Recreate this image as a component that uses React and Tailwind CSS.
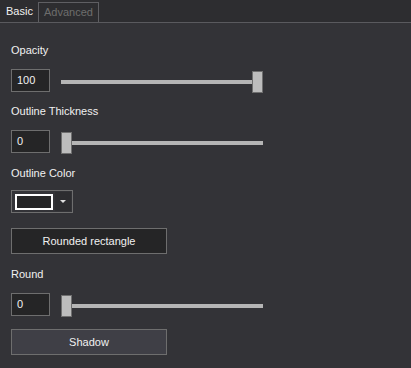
import { useState } from 'react';

function Slider({ value }) {
  const atEnd = value > 0;
  return (
    <div className="relative w-[202px] h-[22px] mt-[2px]">
      <div className={`absolute top-[9px] left-0 h-[4px] bg-[#b5b5b5] ${atEnd ? 'w-[191px]' : 'w-[202px]'}`} />
      <div
        className={`absolute top-0 w-[11px] h-[22px] bg-[#bdbdbd] border border-[#6f6f6f] ${atEnd ? 'right-0' : 'left-0'}`}
      />
    </div>
  );
}

function NumberRow({ value, slider }) {
  return (
    <div className="flex items-start gap-[11px]">
      <div className="w-[39px] h-[23px] border border-[#6e6e6e] bg-[#252526] pl-[5px] flex items-center text-[11px] text-[#f1f1f1]">
        {value}
      </div>
      <Slider value={slider} />
    </div>
  );
}

function Label({ children, className = '' }) {
  return <div className={`h-[14px] leading-[14px] text-[11px] text-[#f1f1f1] ${className}`}>{children}</div>;
}

export default function App() {
  const [tab] = useState('basic');

  return (
    <div
      className="w-[411px] h-[368px] bg-[#333337] overflow-hidden"
      style={{ fontFamily: '"Liberation Sans", Arial, sans-serif' }}
    >
      {/* tab strip */}
      <div className="h-[23px] bg-[#2d2d30] border-b border-[#5a5a5e] flex items-end text-[11px]">
        <div className={`w-[38px] h-[22px] pl-[6px] flex items-center ${tab === 'basic' ? 'text-[#f1f1f1]' : 'text-[#6d6d6d]'}`}>
          Basic
        </div>
        <div className="w-[61px] h-[20px] border border-b-0 border-[#5f5f63] flex items-center justify-center text-[#6d6d6d]">
          Advanced
        </div>
      </div>

      <div className="pl-[11px] flex flex-col">
        <Label className="mt-[20px]">Opacity</Label>
        <div className="mt-[12px]">
          <NumberRow value="100" slider={100} />
        </div>

        <Label className="mt-[11px]">Outline Thickness</Label>
        <div className="mt-[12px]">
          <NumberRow value="0" slider={0} />
        </div>

        <Label className="mt-[12px]">Outline Color</Label>
        <div className="mt-[10px] w-[62px] h-[23px] border border-[#6e6e6e] flex items-center pl-[3px]">
          <div className="w-[38px] h-[16px] border-2 border-white bg-[#252526]" />
          <div className="ml-[2px] w-[16px] h-[19px] bg-[#2d2d30] flex items-center justify-center">
            <svg width="6" height="4" viewBox="0 0 6 4">
              <path d="M0 0 H6 L3 3 Z" fill="#e0e0e0" />
            </svg>
          </div>
        </div>

        <button className="mt-[15px] w-[156px] h-[26px] border border-[#6e6e6e] bg-[#252526] text-[11px] text-[#f1f1f1]">
          Rounded rectangle
        </button>

        <Label className="mt-[13px]">Round</Label>
        <div className="mt-[12px]">
          <NumberRow value="0" slider={0} />
        </div>

        <button className="mt-[12px] w-[156px] h-[26px] border border-[#6e6e6e] bg-[#3f3f46] text-[11px] text-[#f1f1f1]">
          Shadow
        </button>
      </div>
    </div>
  );
}
